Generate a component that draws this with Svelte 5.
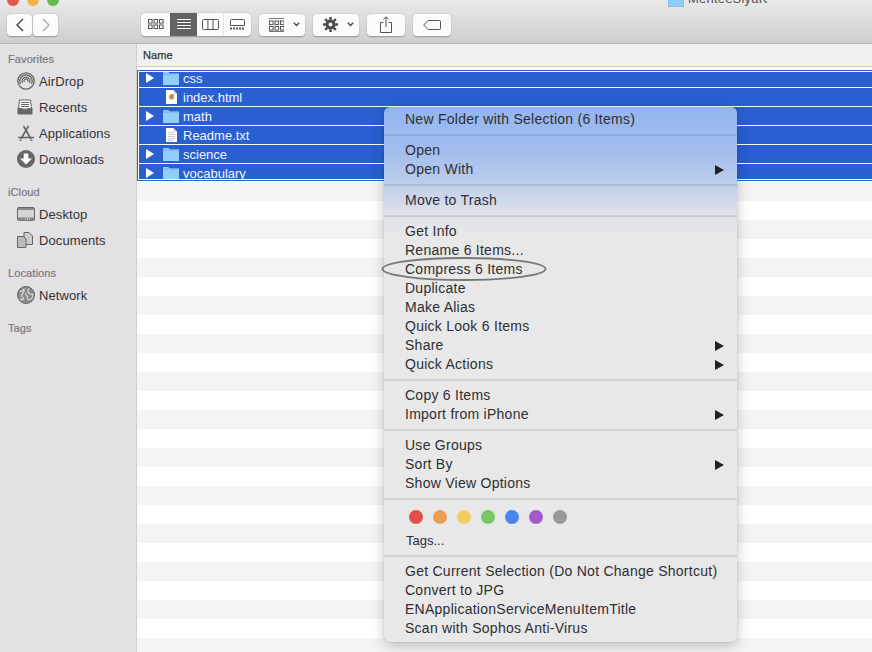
<script>
  const rows = [
    { name: 'css', kind: 'folder' },
    { name: 'index.html', kind: 'html' },
    { name: 'math', kind: 'folder' },
    { name: 'Readme.txt', kind: 'txt' },
    { name: 'science', kind: 'folder' },
    { name: 'vocabulary', kind: 'folder' }
  ];
  const before = [
    [{ t: 'New Folder with Selection (6 Items)' }],
    [{ t: 'Open' }, { t: 'Open With', sub: true }],
    [{ t: 'Move to Trash' }],
    [{ t: 'Get Info' }, { t: 'Rename 6 Items...' }, { t: 'Compress 6 Items' }, { t: 'Duplicate' }, { t: 'Make Alias' }, { t: 'Quick Look 6 Items' }, { t: 'Share', sub: true }, { t: 'Quick Actions', sub: true }],
    [{ t: 'Copy 6 Items' }, { t: 'Import from iPhone', sub: true }],
    [{ t: 'Use Groups' }, { t: 'Sort By', sub: true }, { t: 'Show View Options' }]
  ];
  const services = ['Get Current Selection (Do Not Change Shortcut)', 'Convert to JPG', 'ENApplicationServiceMenuItemTitle', 'Scan with Sophos Anti-Virus'];
  const dots = ['#e0504d', '#ec9d55', '#f3cd61', '#78c765', '#4a85ee', '#a35bca', '#99999c'];
</script>

{#snippet folder()}
  <svg class="ficon" width="16" height="13" viewBox="0 0 16 13">
    <path d="M0 1.2C0 .5.5 0 1.2 0h4.3l1.3 1.6H16V13H0z" fill="#8fcbf6" />
    <rect y="2.4" width="16" height="10.6" fill="#92cef7" />
    <rect y="1.6" width="16" height="1" fill="#6fb6ec" />
  </svg>
{/snippet}

{#snippet grid(x, y)}
  {#each [0, 5.5, 11] as dx}
    {#each [0, 5.5] as dy}
      <rect x={x + dx} y={y + dy} width="3.6" height="3.6" fill="none" stroke="#555" />
    {/each}
  {/each}
{/snippet}

<div class="win">
  <header class="toolbar">
    <div class="lights">
      <i class="red"></i><i class="yellow"></i><i class="green"></i>
      <div class="wintitle">
        <svg width="16" height="13" viewBox="0 0 16 13"><rect width="16" height="13" fill="#92cef7" stroke="#78b8e8" /></svg>
        <span>MenteeSiyaK</span>
      </div>
    </div>
    <div class="tools">
      <div class="nav">
        <button class="btn navb" aria-label="Back">
          <svg width="10" height="14" viewBox="0 0 10 14"><path d="M8 1 2 7l6 6" fill="none" stroke="#444" stroke-width="1.4" /></svg>
        </button>
        <button class="btn navb" aria-label="Forward">
          <svg width="10" height="14" viewBox="0 0 10 14"><path d="m2 1 6 6-6 6" fill="none" stroke="#aaa" stroke-width="1.4" /></svg>
        </button>
      </div>
      <div class="btn views">
        <span class="view v1"><svg width="16" height="11" viewBox="0 0 16 11">{@render grid(.5, .5)}</svg></span>
        <span class="view on v2"><svg width="16" height="11" viewBox="0 0 16 11"><path d="M1 .5h14M1 3.5h14M1 6.5h14M1 9.5h14" stroke="#fff" /></svg></span>
        <span class="view v3"><svg width="17" height="11" viewBox="0 0 17 11"><path d="M1.500.5h14a1 1 0 0 1 1 1v8a1 1 0 0 1-1 1h-14a1 1 0 0 1-1-1v-8a1 1 0 0 1 1-1zM5.900.5v10M11 .5v10" fill="none" stroke="#555" /></svg></span>
        <span class="view v4"><svg width="15" height="11" viewBox="0 0 15 11"><path d="M1.500.5h12a1 1 0 0 1 1 1v5h-14v-5a1 1 0 0 1 1-1z" fill="none" stroke="#555" /><path d="M0 9.500h15" stroke="#555" stroke-width="2" stroke-dasharray="2 1" /></svg></span>
      </div>
      <div class="btn drop groupby">
        <svg width="15" height="14" viewBox="0 0 15 14"><path d="M0 .5h15M0 13.500h15" stroke="#777" />{@render grid(.5, 3)}</svg>
        <svg class="chev" width="7" height="5" viewBox="0 0 7 5"><path d="m.8.8 2.700 2.700L6.200.8" fill="none" stroke="#444" stroke-width="1.300" /></svg>
      </div>
      <div class="btn drop gearb">
        <svg width="15" height="15" viewBox="0 0 15 15"><circle cx="7.500" cy="7.500" r="3.500" fill="none" stroke="#4a4a4a" stroke-width="3" /><path d="M7.500 0v15M0 7.500h15M2.200 2.200l10.600 10.600M12.800 2.200 2.200 12.800" stroke="#4a4a4a" stroke-width="2.400" stroke-dasharray="2.800 9.400" /></svg>
        <svg class="chev" width="7" height="5" viewBox="0 0 7 5"><path d="m.8.8 2.700 2.700L6.200.8" fill="none" stroke="#444" stroke-width="1.300" /></svg>
      </div>
      <div class="btn single share">
        <svg width="12" height="17" viewBox="0 0 12 17"><path d="M3.500 6.500H.5v10h11v-10h-3M6 11V1M3.300 3.500 6 .8l2.700 2.700" fill="none" stroke="#555" /></svg>
      </div>
      <div class="btn single tag">
        <svg width="18" height="10" viewBox="0 0 18 10"><path d="M5 .5h11.500a1 1 0 0 1 1 1v7a1 1 0 0 1-1 1H5L.7 5z" fill="none" stroke="#555" /></svg>
      </div>
    </div>
  </header>

  <div class="body">
    <aside class="side">
      <div class="group first">
        <h4>Favorites</h4>
        <div class="sitem">
          <svg width="18" height="18" viewBox="0 0 18 18" fill="none" stroke="#666"><circle cx="9" cy="9" r="8.200" stroke-width="1.300" /><path d="M3.500 12a6.200 6.200 0 1 1 11 0M5.500 11a4 4 0 1 1 7 0M7.300 10a2 2 0 1 1 3.400 0" stroke-width="1.200" /></svg>
          <span>AirDrop</span>
        </div>
        <div class="sitem">
          <svg width="16" height="16" viewBox="0 0 16 16"><path d="M2.500 1h11l1 9h-13z" fill="#fff" stroke="#666" /><path d="M4 3.500h8M4 5.500h8M4 7.500h8" stroke="#666" /><path d="M.5 9H5l1 1.500h4L11 9h4.500v5.500a1 1 0 0 1-1 1h-13a1 1 0 0 1-1-1z" fill="#666" /></svg>
          <span>Recents</span>
        </div>
        <div class="sitem">
          <svg width="18" height="16" viewBox="0 0 18 16" fill="none" stroke="#666"><path d="M1 12.500h16M6.500 1 14 14M11.500 1 4 14" stroke-width="1.600" /><path d="M2.500 15.500h2M13.500 15.500h2" stroke-width="1.500" /></svg>
          <span>Applications</span>
        </div>
        <div class="sitem">
          <svg width="18" height="18" viewBox="0 0 18 18"><circle cx="9" cy="9" r="9" fill="#666" /><path d="M6.700 3.500h4.600v5H15L9 14.500 3 8.500h3.700z" fill="#fff" /></svg>
          <span>Downloads</span>
        </div>
      </div>
      <div class="group">
        <h4>iCloud</h4>
        <div class="sitem">
          <svg width="18" height="14" viewBox="0 0 18 14"><rect x=".5" y=".5" width="17" height="13" rx="1.500" fill="#d5d5d5" stroke="#666" /><rect x="1" y="1" width="16" height="2" fill="#888" /><rect x="1" y="10.500" width="16" height="3" fill="#888" /><path d="M8 12h5" stroke="#eee" stroke-dasharray="1 1" /></svg>
          <span>Desktop</span>
        </div>
        <div class="sitem">
          <svg width="16" height="16" viewBox="0 0 16 16"><path d="M7 .5h5l3.500 3.500v8.500H7z" fill="#ccc" stroke="#666" /><path d="M.5 4.500h6l2.500 2.500v8.500H.5z" fill="#bbb" stroke="#666" /></svg>
          <span>Documents</span>
        </div>
      </div>
      <div class="group">
        <h4>Locations</h4>
        <div class="sitem">
          <svg width="18" height="18" viewBox="0 0 18 18"><circle cx="9" cy="9" r="8.500" fill="#8a8a8a" stroke="#666" /><path d="M3 5c2 1 3 0 4-2 1 2 0 3-1 4s-2 3 0 5-2 2-3 1M12 2c-2 3-1 5 1 6s3-1 3 1-2 5-4 5-1-3-2-4-2-2-1-3" fill="none" stroke="#ddd" stroke-width="1.100" /></svg>
          <span>Network</span>
        </div>
      </div>
      <div class="group">
        <h4>Tags</h4>
      </div>
    </aside>

    <main class="main">
      <div class="colhead">Name</div>
      <div class="selbox">
        <div class="selclip">
          {#each rows as r}
            <div class="row">
              <span class="tri">{#if r.kind === 'folder'}<svg width="8" height="10" viewBox="0 0 8 10"><path d="M0 0l8 5-8 5z" fill="#fff" /></svg>{/if}</span>
              <span class="ic">
                {#if r.kind === 'folder'}
                  {@render folder()}
                {:else}
                  <svg width="11" height="14" viewBox="0 0 11 14">
                    <path d="M0 0h7.500L11 3.500V14H0z" fill="#fff" />
                    <path d="M7.500 0v3.500H11" fill="#ccc" />
                    {#if r.kind === 'html'}
                      <circle cx="5.500" cy="7" r="2.700" fill="#d9a441" />
                      <path d="M5.500 4.300a2.700 2.700 0 0 1 2.400 1.400H5.500z" fill="#d9534a" />
                      <circle cx="5.500" cy="7" r="1.100" fill="#4a86d8" />
                    {:else}
                      <path d="M2 4.500h5M2 6.500h7M2 8.500h7M2 10.500h7M2 12.500h5" stroke="#c8c8c8" />
                    {/if}
                  </svg>
                {/if}
              </span>
              <span class="rname">{r.name}</span>
            </div>
          {/each}
        </div>
      </div>
      <div class="stripes"></div>
    </main>
  </div>

  <div class="menu">
    {#each before as sec}
      <section>
        {#each sec as it}
          <div class="mi"><span>{it.t}</span>{#if it.sub}<svg width="9" height="10" viewBox="0 0 9 10"><path d="M0 0l9 5-9 5z" fill="#222" /></svg>{/if}</div>
        {/each}
      </section>
      <div class="sep"></div>
    {/each}
    <section>
      <div class="dots">
        {#each dots as d}<i style="background:{d}"></i>{/each}
      </div>
      <div class="mi small">Tags...</div>
    </section>
    <div class="sep"></div>
    <section>
      {#each services as s}<div class="mi"><span>{s}</span></div>{/each}
    </section>
  </div>

  <svg class="ring" width="168" height="26" viewBox="0 0 168 26"><ellipse cx="84" cy="13" rx="81.500" ry="11" fill="none" stroke="#767676" stroke-width="1.800" /></svg>
</div>

<style>
  :global(body) { margin: 0; }
  .win {
    position: relative;
    width: 872px;
    height: 652px;
    overflow: hidden;
    display: flex;
    flex-direction: column;
    font-family: "Liberation Sans", Arial, sans-serif;
    color: #2c2c2c;
    background: #fff;
  }
  .toolbar {
    height: 43px;
    flex: none;
    border-bottom: 1px solid #b3b3b3;
    background: linear-gradient(#e9e9e9, #cfcfcf);
  }
  .lights {
    height: 8px;
    display: flex;
    gap: 8px;
    padding-left: 7px;
    position: relative;
    overflow: hidden;
  }
  .lights i { width: 12px; height: 12px; border-radius: 50%; margin-top: -6px; flex: none; }
  .red { background: #e5574f; }
  .yellow { background: #f0b64c; }
  .green { background: #66bb4e; }
  .wintitle {
    margin-left: 601px;
    margin-top: -6px;
    display: flex;
    align-items: center;
    gap: 4px;
    height: 13px;
    font-size: 13px;
    letter-spacing: .2px;
    color: #555;
    white-space: nowrap;
    align-self: flex-start;
  }
  .wintitle span { position: relative; top: -2px; }
  .tools { display: flex; align-items: center; padding: 5px 0 0 7px; height: 23px; }
  .btn {
    box-sizing: border-box;
    height: 22px;
    background: #fbfbfb;
    border: 0;
    border-radius: 4px;
    box-shadow: 0 .5px 1.500px rgba(0, 0, 0, .3);
    display: flex;
    align-items: center;
    justify-content: center;
    padding: 0;
  }
  .nav { display: flex; gap: 1px; margin-right: 83px; }
  .navb { width: 25px; }
  .views { width: 110px; height: 23px; justify-content: flex-start; margin-right: 8px; overflow: hidden; }
  .view { height: 23px; display: flex; align-items: center; justify-content: center; box-sizing: border-box; }
  .v1 { width: 29px; }
  .v2 { width: 27px; background: #636363; }
  .v3 { width: 27px; border-right: 1px solid #e2e2e2; }
  .v4 { width: 27px; }
  .drop { width: 46px; gap: 9px; margin-right: 8px; justify-content: flex-start; padding-left: 10px; }
  .single { width: 38px; margin-right: 8px; }

  .body { flex: 1; display: flex; min-height: 0; }
  .side {
    flex: none;
    box-sizing: border-box;
    background: #e3e1e3;
    border-right: 1px solid #cfcfcf;
    width: 137px;
    padding-top: 8px;
  }
  .group { margin-top: 13px; }
  .group.first { margin-top: 0; }
  h4 {
    margin: 0 0 2px 8px;
    font-size: 11px;
    line-height: 14px;
    font-weight: 400;
    letter-spacing: .1px;
    color: #7a787c;
    -webkit-text-stroke: .2px #7a787c;
  }
  .sitem { height: 26px; display: flex; align-items: center; font-size: 13px; letter-spacing: .1px; color: #333; position: relative; padding-left: 39px; }
  .sitem svg { position: absolute; left: 17px; top: 50%; transform: translateY(-50%); }

  .main { flex: 1; display: flex; flex-direction: column; min-width: 0; background: #fff; }
  .colhead {
    height: 22px;
    flex: none;
    background: #f0f0f0;
    border-bottom: 1px solid #c9c9c9;
    font-size: 11px;
    line-height: 22px;
    padding-left: 6px;
    letter-spacing: .1px;
    color: #333;
    -webkit-text-stroke: .25px #333;
  }
  .selbox {
    margin-top: 3px;
    flex: none;
    border: 1px solid #2a5fd0;
    border-right: 0;
    padding: 1px 0 1px 1px;
    height: 107px;
  }
  .selclip { height: 107px; overflow: hidden; }
  .row {
    height: 18px;
    margin-bottom: 1px;
    background: #2a5fd2;
    display: flex;
    align-items: center;
    color: #f0f4ff;
    font-size: 13px;
  }
  .row:first-child { margin-top: -3px; }
  .tri { width: 24px; flex: none; display: flex; padding-left: 7px; box-sizing: border-box; }
  .ic { width: 20px; flex: none; display: flex; justify-content: flex-start; padding-right: 0; }
  .ic svg { display: block; }
  .row .ic :global(svg[width="11"]) { margin-left: 3px; }
  .rname { white-space: nowrap; }
  .stripes {
    flex: 1;
    margin-top: 1px;
    background: repeating-linear-gradient(#f4f4f4 0 19px, #fff 19px 38px);
  }

  .menu {
    position: absolute;
    left: 384px;
    top: 107px;
    width: 353px;
    height: 535px;
    box-sizing: border-box;
    padding: 3px 0;
    border-radius: 6px;
    background: linear-gradient(#93b5ee 0, #a2bdee 43px, #bccdea 76px, #d0d9ea 93px, #dfe2e9 108px, #e8e8e8 130px);
    box-shadow: 0 0 1px rgba(0, 0, 0, .45), 0 4px 14px rgba(0, 0, 0, .22);
    font-size: 14px;
    letter-spacing: .26px;
    color: #2e2e33;
  }
  .mi {
    height: 19px;
    line-height: 19px;
    padding: 0 13px 0 21px;
    display: flex;
    align-items: center;
    justify-content: space-between;
    white-space: nowrap;
  }
  .mi.small { font-size: 13px; letter-spacing: 0; padding-left: 22px; }
  .sep { height: 2px; margin: 5px 0; background: rgba(70, 80, 110, .14); }
  .dots { height: 24px; margin-bottom: 2px; box-sizing: border-box; display: flex; align-items: center; gap: 10px; padding-left: 25px; }
  .dots i { width: 14px; height: 14px; border-radius: 50%; }
  .ring { position: absolute; left: 380px; top: 256px; }
</style>
